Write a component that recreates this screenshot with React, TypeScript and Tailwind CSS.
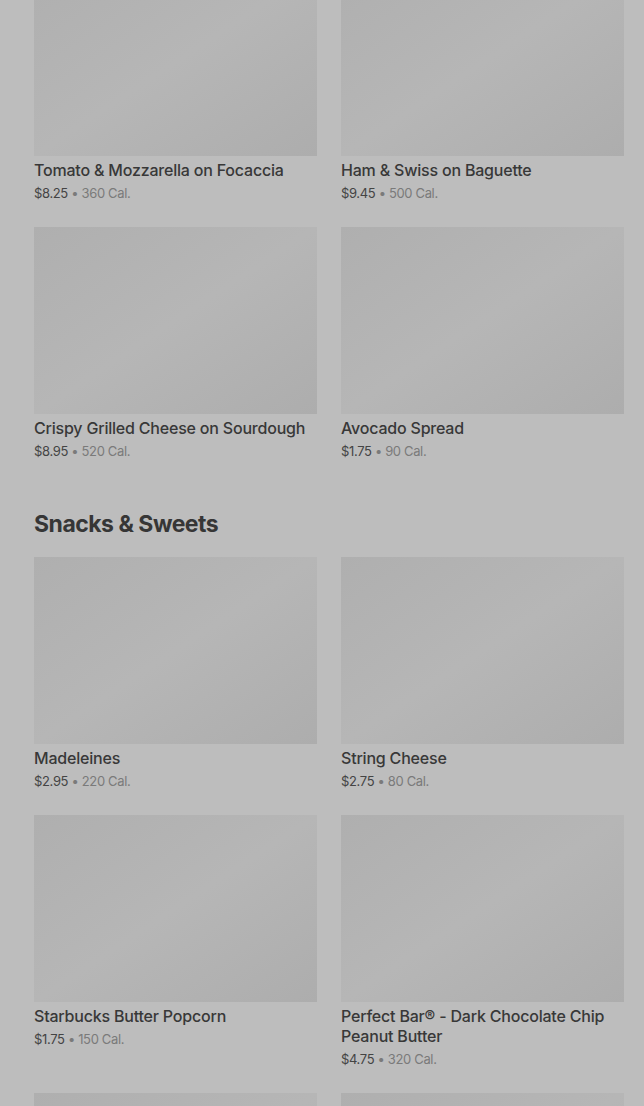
const sandwiches = [
  { name: 'Tomato & Mozzarella on Focaccia', price: '$8.25', cal: '360 Cal.' },
  { name: 'Ham & Swiss on Baguette', price: '$9.45', cal: '500 Cal.' },
  { name: 'Crispy Grilled Cheese on Sourdough', price: '$8.95', cal: '520 Cal.' },
  { name: 'Avocado Spread', price: '$1.75', cal: '90 Cal.' },
];

const snacks = [
  { name: 'Madeleines', price: '$2.95', cal: '220 Cal.' },
  { name: 'String Cheese', price: '$2.75', cal: '80 Cal.' },
  { name: 'Starbucks Butter Popcorn', price: '$1.75', cal: '150 Cal.' },
  { name: 'Perfect Bar® - Dark Chocolate Chip Peanut Butter', price: '$4.75', cal: '320 Cal.' },
];

type Item = { name: string; price: string; cal: string };

function Thumb() {
  return <div className="h-[187px] w-full bg-gradient-to-br from-[#afafaf] via-[#b6b6b6] to-[#adadad]" />;
}

function ItemCard({ item }: { item: Item }) {
  return (
    <div className="flex flex-col">
      <Thumb />
      <div className="mt-1 text-[16px] leading-5 font-medium tracking-[-0.2px] text-[#383838]">{item.name}</div>
      <div className="mt-[3px] text-[13px] leading-5 tracking-[-0.35px] text-[#7a7a7a]">
        <span className="text-[#444444]">{item.price}</span> • {item.cal}
      </div>
    </div>
  );
}

export default function App() {
  return (
    <div
      className="min-h-screen h-[1106px] overflow-hidden bg-[#bdbdbd] pl-[34px] pr-[20px]"
      style={{ fontFamily: 'Inter, "Noto Sans", sans-serif' }}
    >
      <div className="mt-[-31px] grid grid-cols-2 gap-x-6 gap-y-6">
        {sandwiches.map((item) => (
          <ItemCard key={item.name} item={item} />
        ))}
      </div>
      <h2 className="mt-[49px] mb-[19px] text-[23px] leading-7 font-bold tracking-[-0.5px] text-[#363636]">
        Snacks &amp; Sweets
      </h2>
      <div className="grid grid-cols-2 gap-x-6 gap-y-6">
        {snacks.map((item) => (
          <ItemCard key={item.name} item={item} />
        ))}
        {/* next row, only its thumbnails are in view */}
        <Thumb />
        <Thumb />
      </div>
    </div>
  );
}
